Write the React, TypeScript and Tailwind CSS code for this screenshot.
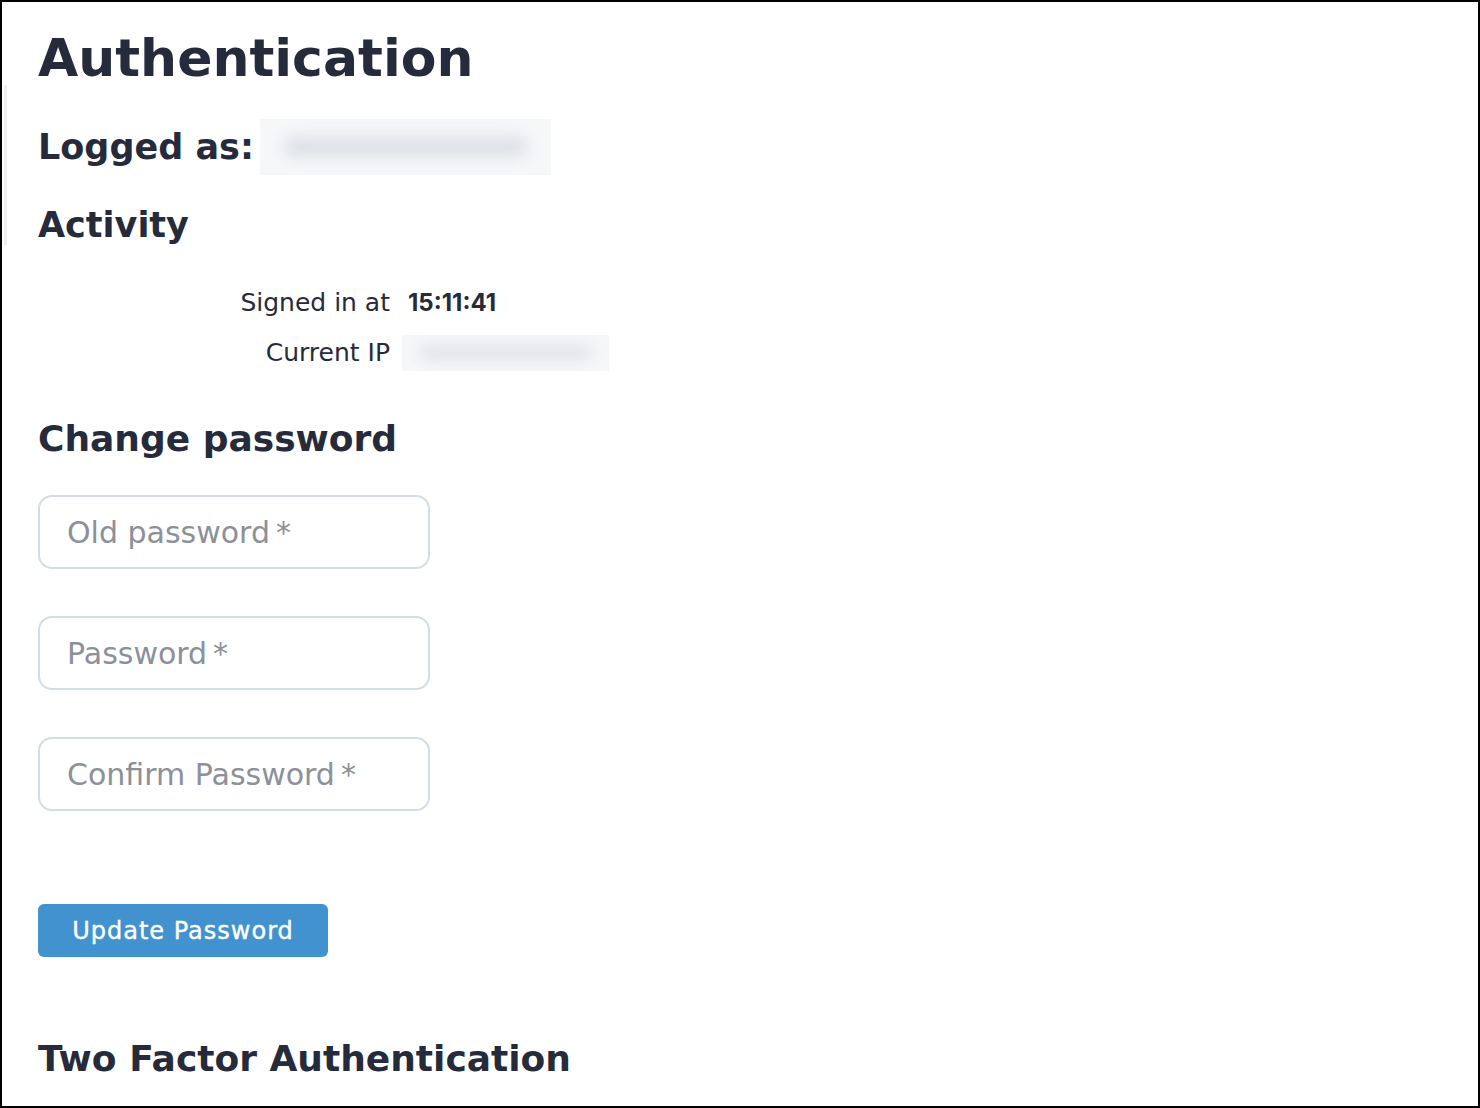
const Redacted = ({ w, h }: { w: number; h: number }) => {
  return (
    <div
      className="relative shrink-0 overflow-hidden bg-[#f6f7f9]"
      style={{ width: w, height: h }}
    >
      <div className="absolute inset-x-[8%] top-1/2 h-[40%] -translate-y-1/2 rounded-full bg-[#dfe2e8] blur-[7px]" />
    </div>
  );
};

const Field = ({ label }: { label: string }) => {
  return (
    <input
      type="password"
      placeholder={label}
      className="block h-[74px] w-[392px] rounded-[14px] border-2 border-[#d3dde6] bg-white px-[27px] text-[30px] text-[#262b3b] outline-none placeholder:text-[#8c9099]"
    />
  );
};

const App = () => {
  return (
    <div className="h-[1108px] w-full overflow-hidden border-2 border-black bg-white font-['DejaVu_Sans',sans-serif] text-[#262b3b]">
      <div className="relative pl-9 pt-[25px]">
        {/* faint edge of a sidebar */}
        <div className="absolute left-[2px] top-[83px] h-[160px] w-[3px] bg-[#eef0f3]" />

        <h1 className="text-[52px] font-bold leading-[62px]">Authentication</h1>

        <div className="mt-[30px] flex items-center gap-[6px]">
          <h2 className="text-[35px] font-bold leading-[56px]">Logged as:</h2>
          <Redacted w={291} h={56} />
        </div>

        <h2 className="mt-[28px] text-[35px] font-bold leading-[44px]">Activity</h2>

        <table className="mt-[31px] text-[25px]">
          <tbody>
            <tr className="h-[50px]">
              <td className="w-[364px] pr-[12px] text-right">Signed in at</td>
              <td className="pl-[6px] font-['Inter',sans-serif] text-[24px] font-bold">
                15:11:41
              </td>
            </tr>
            <tr className="h-[50px]">
              <td className="w-[364px] pr-[12px] text-right">Current IP</td>
              <td>
                <Redacted w={207} h={36} />
              </td>
            </tr>
          </tbody>
        </table>

        <h2 className="mt-[39px] text-[36px] font-bold leading-[44px]">
          Change password
        </h2>

        <form className="mt-[34px] flex flex-col gap-[47px]">
          <Field label={"Old password\u2009*"} />
          <Field label={"Password\u2009*"} />
          <Field label={"Confirm Password\u2009*"} />

          <button
            type="button"
            className="mt-[46px] h-[53px] w-[290px] rounded-[6px] bg-[#4192ce] text-[24px] tracking-[1px] text-white [-webkit-text-stroke:0.4px_white]"
          >
            Update Password
          </button>
        </form>

        <h2 className="mt-[80px] text-[36px] font-bold leading-[44px]">
          Two Factor Authentication
        </h2>
      </div>
    </div>
  );
};

export default App;
